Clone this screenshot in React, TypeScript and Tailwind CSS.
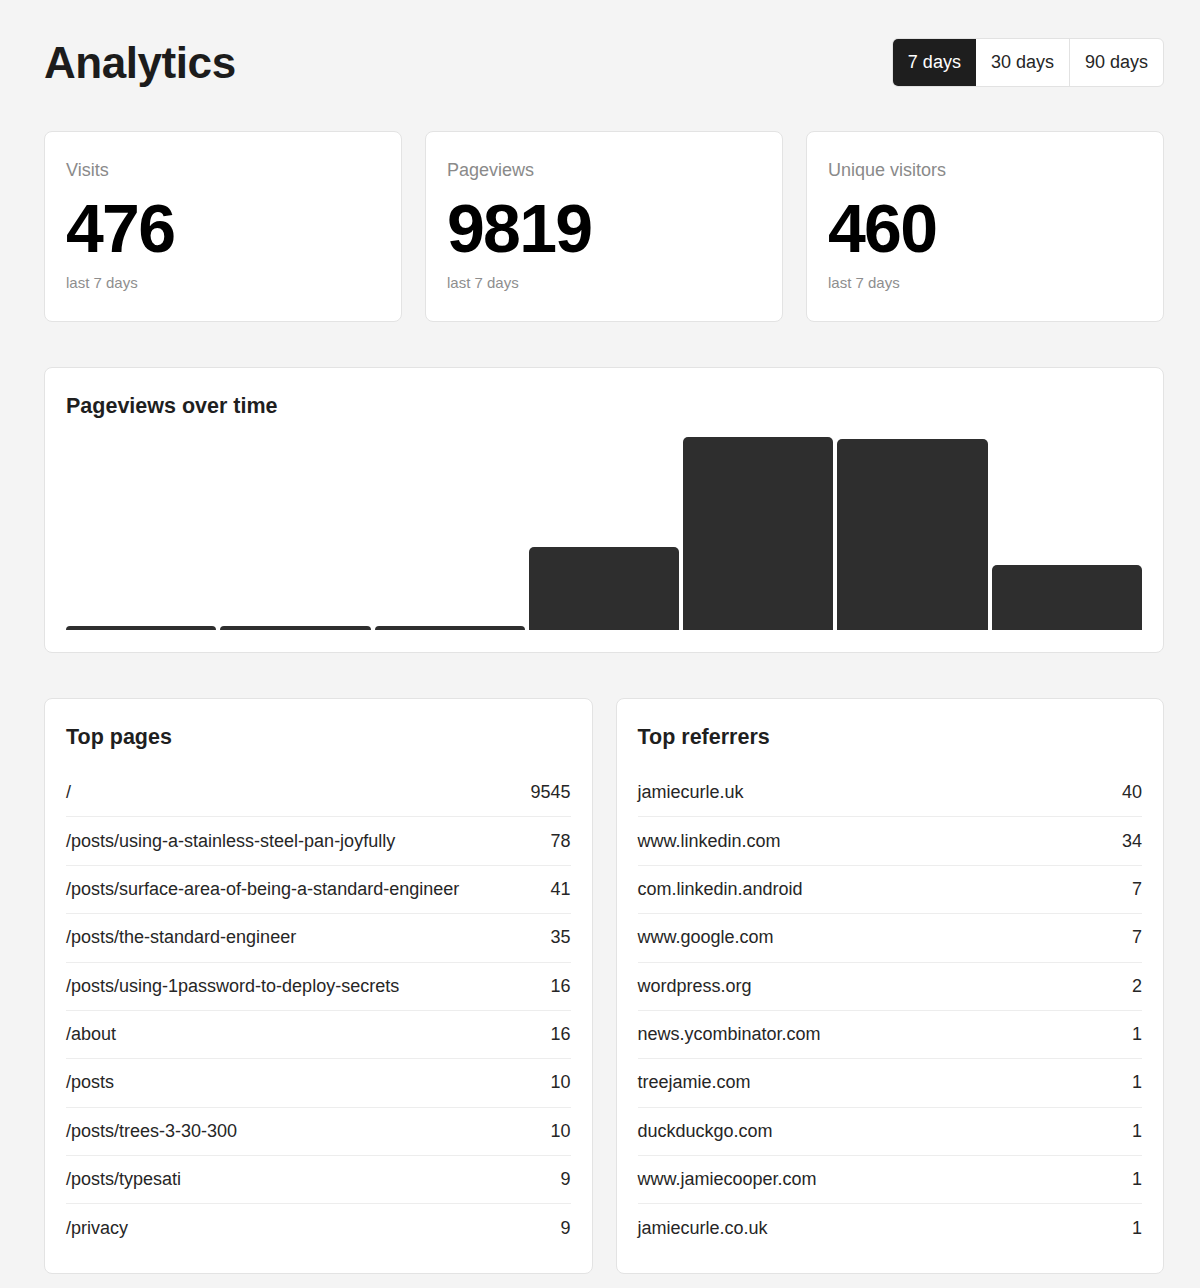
const stats = [
  { label: "Visits", value: 476 },
  { label: "Pageviews", value: 9819 },
  { label: "Unique visitors", value: 460 },
];

// daily pageviews, oldest first
const daily = [0, 0, 0, 1502, 3490, 3452, 1175];

const topPages: [string, number][] = [
  ["/", 9545],
  ["/posts/using-a-stainless-steel-pan-joyfully", 78],
  ["/posts/surface-area-of-being-a-standard-engineer", 41],
  ["/posts/the-standard-engineer", 35],
  ["/posts/using-1password-to-deploy-secrets", 16],
  ["/about", 16],
  ["/posts", 10],
  ["/posts/trees-3-30-300", 10],
  ["/posts/typesati", 9],
  ["/privacy", 9],
];

const topReferrers: [string, number][] = [
  ["jamiecurle.uk", 40],
  ["www.linkedin.com", 34],
  ["com.linkedin.android", 7],
  ["www.google.com", 7],
  ["wordpress.org", 2],
  ["news.ycombinator.com", 1],
  ["treejamie.com", 1],
  ["duckduckgo.com", 1],
  ["www.jamiecooper.com", 1],
  ["jamiecurle.co.uk", 1],
];

const ranges = ["7 days", "30 days", "90 days"];

function RangePicker({ active }: { active: number }) {
  return (
    <div className="flex rounded-md border border-[#e2e2e2] bg-white overflow-hidden">
      {ranges.map((r, i) => (
        <button
          key={r}
          className={`px-[15px] py-[11px] text-[18px] leading-[25px] ${
            i === active ? "bg-[#1e1e1e] text-white" : "text-[#262626]"
          } ${i > 1 ? "border-l border-[#e2e2e2]" : ""}`}
        >
          {r}
        </button>
      ))}
    </div>
  );
}

function StatCard({ label, value }: { label: string; value: number }) {
  return (
    <div className="bg-white border border-[#e3e3e3] rounded-lg px-[21px] pt-[24px] pb-[28px]">
      <div className="text-[18px] leading-7 text-[#8a8a8a]">{label}</div>
      <div className="mt-[10px] text-[68px] leading-none font-bold tracking-tight text-black">
        {value}
      </div>
      <div className="mt-[11px] text-[15px] leading-5 text-[#8e8e8e]">last 7 days</div>
    </div>
  );
}

function Chart() {
  const max = Math.max(...daily);
  return (
    <div className="bg-white border border-[#e3e3e3] rounded-lg px-[21px] pt-[25px] pb-[22px]">
      <h2 className="text-[21.5px] leading-[26px] font-bold text-[#1f1f1f]">
        Pageviews over time
      </h2>
      <div className="mt-[18px] h-[193px] flex items-end gap-1">
        {daily.map((v, i) => (
          <div
            key={i}
            className="flex-1 bg-[#2e2e2e] rounded-t-[5px]"
            style={{ height: Math.max(4, (v / max) * 193) }}
          />
        ))}
      </div>
    </div>
  );
}

function ListCard({ title, rows }: { title: string; rows: [string, number][] }) {
  return (
    <div className="bg-white border border-[#e3e3e3] rounded-lg px-[21px] pt-[25px] pb-[21px]">
      <h2 className="text-[21.5px] leading-[26px] font-bold text-[#1f1f1f]">{title}</h2>
      <ul className="mt-[19px]">
        {rows.map(([name, count], i) => (
          <li
            key={name}
            className={`flex justify-between py-[11.2px] text-[18px] leading-[25px] text-[#262626] ${
              i < rows.length - 1 ? "border-b border-[#ededed]" : ""
            }`}
          >
            <span>{name}</span>
            <span>{count}</span>
          </li>
        ))}
      </ul>
    </div>
  );
}

export default function App() {
  return (
    <div
      className="min-h-screen bg-[#f4f4f4] pl-[44px] pr-[36px] pt-[38px] pb-[12px]"
      style={{ fontFamily: '"Liberation Sans", Arial, sans-serif' }}
    >
      <header className="flex items-center justify-between">
        <h1 className="text-[44px] leading-none font-bold tracking-[-0.01em] text-[#1c1c1c]">
          Analytics
        </h1>
        <RangePicker active={0} />
      </header>

      <div className="mt-[44px] grid grid-cols-3 gap-[23px]">
        {stats.map((s) => (
          <StatCard key={s.label} label={s.label} value={s.value} />
        ))}
      </div>

      <div className="mt-[45px]">
        <Chart />
      </div>

      <div className="mt-[45px] grid grid-cols-2 gap-[23px]">
        <ListCard title="Top pages" rows={topPages} />
        <ListCard title="Top referrers" rows={topReferrers} />
      </div>
    </div>
  );
}
